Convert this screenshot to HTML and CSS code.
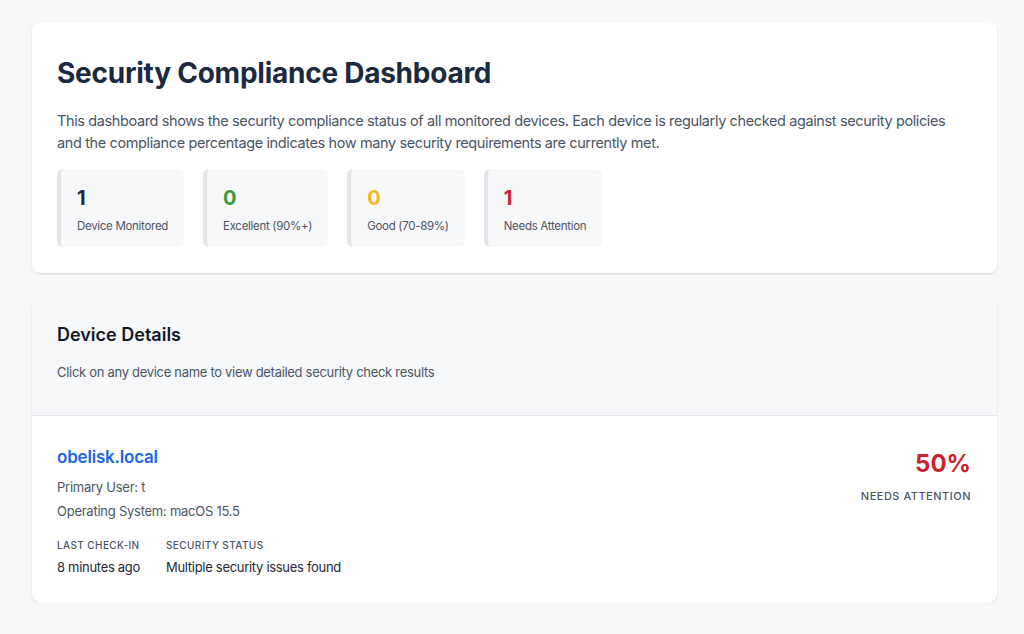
FILE: index.html
```html
<!DOCTYPE html>
<html lang="en">
<head>
<meta charset="utf-8">
<title>Security Compliance Dashboard</title>
<link rel="stylesheet" href="styles.css">
</head>
<body>
<main class="page">
  <section class="card summary">
    <h1 class="title">Security Compliance Dashboard</h1>
    <p class="intro">This dashboard shows the security compliance status of all monitored devices. Each device is regularly checked against security policies and the compliance percentage indicates how many security requirements are currently met.</p>
    <div class="stats">
      <div class="stat"><div class="stat-num num-total">1</div><div class="stat-label">Device Monitored</div></div>
      <div class="stat"><div class="stat-num num-excellent">0</div><div class="stat-label">Excellent (90%+)</div></div>
      <div class="stat"><div class="stat-num num-good">0</div><div class="stat-label">Good (70-89%)</div></div>
      <div class="stat"><div class="stat-num num-bad">1</div><div class="stat-label">Needs Attention</div></div>
    </div>
  </section>

  <section class="card devices">
    <header class="devices-head">
      <h2 class="devices-title">Device Details</h2>
      <p class="devices-sub">Click on any device name to view detailed security check results</p>
    </header>
    <div class="device">
      <div class="device-info">
        <a class="device-name" href="#">obelisk.local</a>
        <div class="device-line first">Primary User: t</div>
        <div class="device-line">Operating System: macOS 15.5</div>
        <div class="meta">
          <div class="meta-item">
            <div class="meta-label">Last Check-in</div>
            <div class="meta-value">8 minutes ago</div>
          </div>
          <div class="meta-item">
            <div class="meta-label">Security Status</div>
            <div class="meta-value">Multiple security issues found</div>
          </div>
        </div>
      </div>
      <div class="score">
        <div class="score-num">50%</div>
        <div class="score-label">Needs Attention</div>
      </div>
    </div>
  </section>
</main>
</body>
</html>
```

FILE: styles.css
```css
* { box-sizing: border-box; }
html, body { margin: 0; padding: 0; }
body {
  background: #f7f8fa;
  font-family: Inter, "Noto Sans", "Liberation Sans", sans-serif;
  color: #1f2937;
}
.page {
  width: 965px;
  margin-left: 32px;
  padding-top: 23px;
  display: flex;
  flex-direction: column;
  gap: 26px;
}
.card {
  background: #ffffff;
  border-radius: 8px;
  box-shadow: 0 1px 3px rgba(0,0,0,0.08), 0 1px 2px rgba(0,0,0,0.04);
  overflow: hidden;
}
.summary { padding: 33px 25px 26px; }
.title {
  margin: 0;
  font-size: 28px;
  line-height: 34px;
  font-weight: 700;
  color: #1b2a41;
  letter-spacing: -0.25px;
}
.intro {
  margin: 20px 0 0;
  font-size: 14.5px;
  line-height: 22px;
  letter-spacing: -0.38px;
  color: #4b5563;
}
.stats {
  margin-top: 15px;
  display: flex;
  gap: 19px;
}
.stat {
  background: #f7f8fa;
  border-left: 4px solid #e2e5ea;
  border-radius: 6px;
  padding: 17px 16px 13px;
}
.stat-num {
  font-size: 20px;
  line-height: 24px;
  font-weight: 700;
}
.num-total { color: #1b2a41; }
.num-excellent { color: #3b9a3b; }
.num-good { color: #f2b824; }
.num-bad { color: #cc2230; }
.stat-label {
  margin-top: 8px;
  font-size: 11.5px;
  line-height: 16px;
  letter-spacing: -0.3px;
  color: #4b5563;
}
.devices-head {
  background: #f7f8fa;
  border-bottom: 1px solid #e5e7eb;
  padding: 24px 25px 34px;
}
.devices-title {
  margin: 0;
  font-size: 18px;
  line-height: 24px;
  font-weight: 600;
  color: #111827;
}
.devices-sub {
  margin: 16px 0 0;
  font-size: 13px;
  line-height: 18px;
  letter-spacing: -0.3px;
  color: #4b5563;
}
.device {
  display: flex;
  justify-content: space-between;
  align-items: flex-start;
  padding: 29px 26px 25px 25px;
}
.device-name {
  display: block;
  font-size: 17px;
  line-height: 24px;
  font-weight: 600;
  letter-spacing: -0.2px;
  color: #1a66e6;
  text-decoration: none;
}
.device-line {
  font-size: 13px;
  line-height: 20px;
  letter-spacing: -0.25px;
  color: #4b5563;
  margin-top: 4px;
}
.device-line.first { margin-top: 8px; }
.meta {
  margin-top: 17px;
  display: flex;
  gap: 26px;
}
.meta-label {
  font-size: 10px;
  line-height: 14px;
  font-weight: 500;
  letter-spacing: 0.4px;
  text-transform: uppercase;
  color: #4b5563;
}
.meta-value {
  margin-top: 5px;
  font-size: 13px;
  line-height: 20px;
  letter-spacing: -0.3px;
  color: #1f2937;
}
.score {
  text-align: right;
  padding-top: 4px;
}
.score-num {
  font-size: 24px;
  line-height: 30px;
  font-weight: 700;
  color: #cc2230;
}
.score-label {
  margin-top: 10px;
  font-size: 11px;
  line-height: 14px;
  font-weight: 500;
  letter-spacing: 0.5px;
  text-transform: uppercase;
  color: #4b5563;
}
```
